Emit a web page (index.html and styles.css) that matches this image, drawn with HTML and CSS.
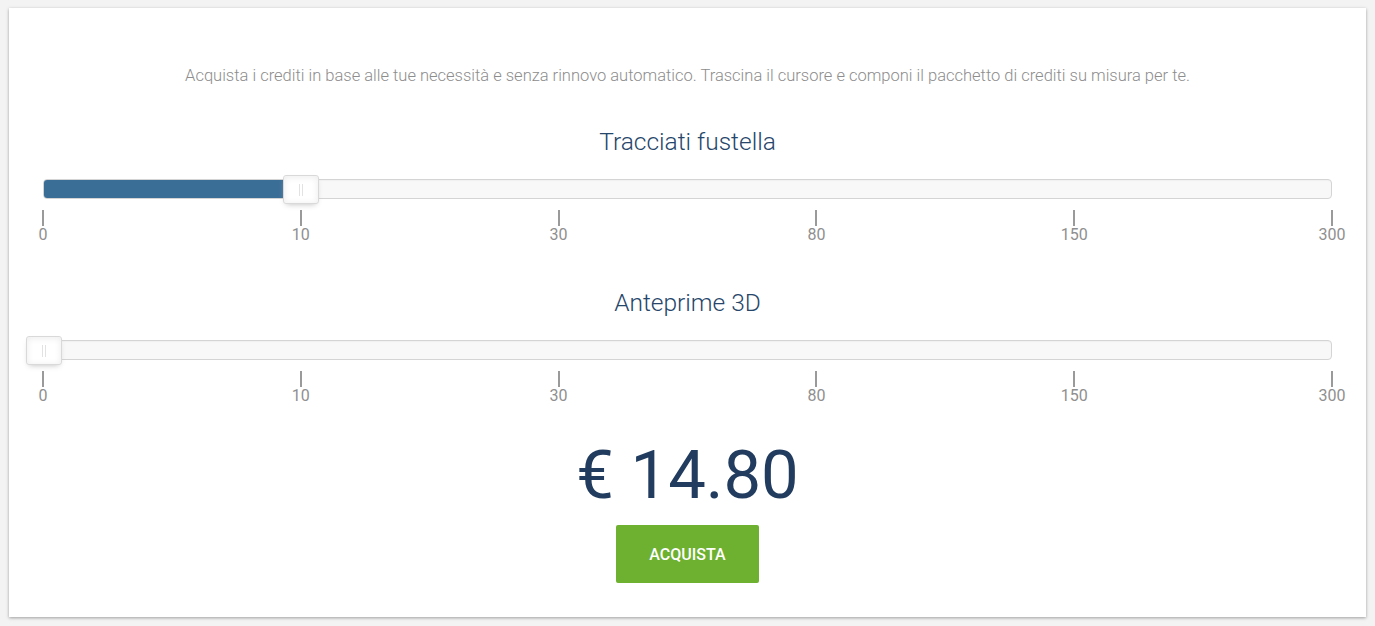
FILE: index.html
```html
<!DOCTYPE html>
<html lang="it">
<head>
<meta charset="utf-8">
<title>Acquista crediti</title>
<link rel="stylesheet" href="styles.css">
</head>
<body>
<div class="card">
  <p class="intro">Acquista i crediti in base alle tue necessità e senza rinnovo automatico. Trascina il cursore e componi il pacchetto di crediti su misura per te.</p>

  <section class="slider-block">
    <h2 class="slider-title">Tracciati fustella</h2>
    <div class="track">
      <div class="fill" style="width: 20%"></div>
      <div class="handle" style="left: 20%"></div>
    </div>
    <div class="ticks">
      <div class="tick"><span class="mark"></span><span class="label">0</span></div>
      <div class="tick"><span class="mark"></span><span class="label">10</span></div>
      <div class="tick"><span class="mark"></span><span class="label">30</span></div>
      <div class="tick"><span class="mark"></span><span class="label">80</span></div>
      <div class="tick"><span class="mark"></span><span class="label">150</span></div>
      <div class="tick"><span class="mark"></span><span class="label">300</span></div>
    </div>
  </section>

  <section class="slider-block second">
    <h2 class="slider-title">Anteprime 3D</h2>
    <div class="track">
      <div class="fill" style="width: 0%"></div>
      <div class="handle" style="left: 0%"></div>
    </div>
    <div class="ticks">
      <div class="tick"><span class="mark"></span><span class="label">0</span></div>
      <div class="tick"><span class="mark"></span><span class="label">10</span></div>
      <div class="tick"><span class="mark"></span><span class="label">30</span></div>
      <div class="tick"><span class="mark"></span><span class="label">80</span></div>
      <div class="tick"><span class="mark"></span><span class="label">150</span></div>
      <div class="tick"><span class="mark"></span><span class="label">300</span></div>
    </div>
  </section>

  <div class="total">
    <div class="price">€ 14.80</div>
    <button class="buy" type="button">ACQUISTA</button>
  </div>
</div>
</body>
</html>
```

FILE: styles.css
```css
* { box-sizing: border-box; }

html, body {
  margin: 0;
  height: 100%;
}

body {
  background: #f3f3f3;
  padding: 8px 9px 9px 9px;
  font-family: Roboto, "Liberation Sans", Arial, sans-serif;
}

.card {
  background: #fff;
  height: 609px;
  padding: 0 34px;
  box-shadow: 0 1px 3px rgba(0, 0, 0, 0.35);
  display: flex;
  flex-direction: column;
}

.intro {
  margin: 58px 0 0 0;
  text-align: center;
  font-size: 16.5px;
  line-height: 20px;
  font-weight: 300;
  color: #8d8d8d;
}

.slider-block {
  margin-top: 41px;
}

.slider-block.second {
  margin-top: 44px;
}

.slider-title {
  margin: 0;
  text-align: center;
  font-size: 24.5px;
  line-height: 30px;
  font-weight: 300;
  color: #26466a;
}

.track {
  position: relative;
  margin-top: 22px;
  height: 20px;
  background: #f8f8f8;
  border: 1px solid #d4d4d4;
  border-radius: 4px;
  box-shadow: inset 0 1px 1px #f0f0f0;
}

.fill {
  height: 100%;
  background: #3b6e96;
  border-radius: 3px 0 0 3px;
}

.handle {
  position: absolute;
  top: -5px;
  width: 36px;
  height: 29px;
  margin-left: -18px;
  background: #fff;
  border: 1px solid #d9d9d9;
  border-radius: 3px;
  box-shadow: inset 0 0 1px #fff, inset 0 1px 7px #ebebeb, 0 3px 6px -3px #bbb;
}

.handle::before,
.handle::after {
  content: "";
  position: absolute;
  top: 8px;
  width: 1px;
  height: 12px;
  background: #e2e2e2;
}

.handle::before { left: 15px; }
.handle::after { left: 18px; }

.ticks {
  display: flex;
  justify-content: space-between;
  margin-top: 11px;
}

.tick {
  width: 0;
  display: flex;
  flex-direction: column;
  align-items: center;
}

.mark {
  display: block;
  width: 2px;
  height: 16px;
  background: #9a9a9a;
}

.label {
  display: block;
  font-size: 16px;
  line-height: 18px;
  color: #8f8f8f;
  white-space: nowrap;
}

.total {
  display: flex;
  flex-direction: column;
  align-items: center;
  margin-top: 30px;
}

.price {
  font-size: 67px;
  line-height: 80px;
  font-weight: 400;
  color: #213c5e;
}

.buy {
  margin-top: 10px;
  width: 143px;
  height: 58px;
  border: none;
  border-radius: 2px;
  background: #6eb030;
  color: #fff;
  font-family: Roboto, "Liberation Sans", Arial, sans-serif;
  font-size: 16px;
  font-weight: 500;
  cursor: pointer;
}
```
